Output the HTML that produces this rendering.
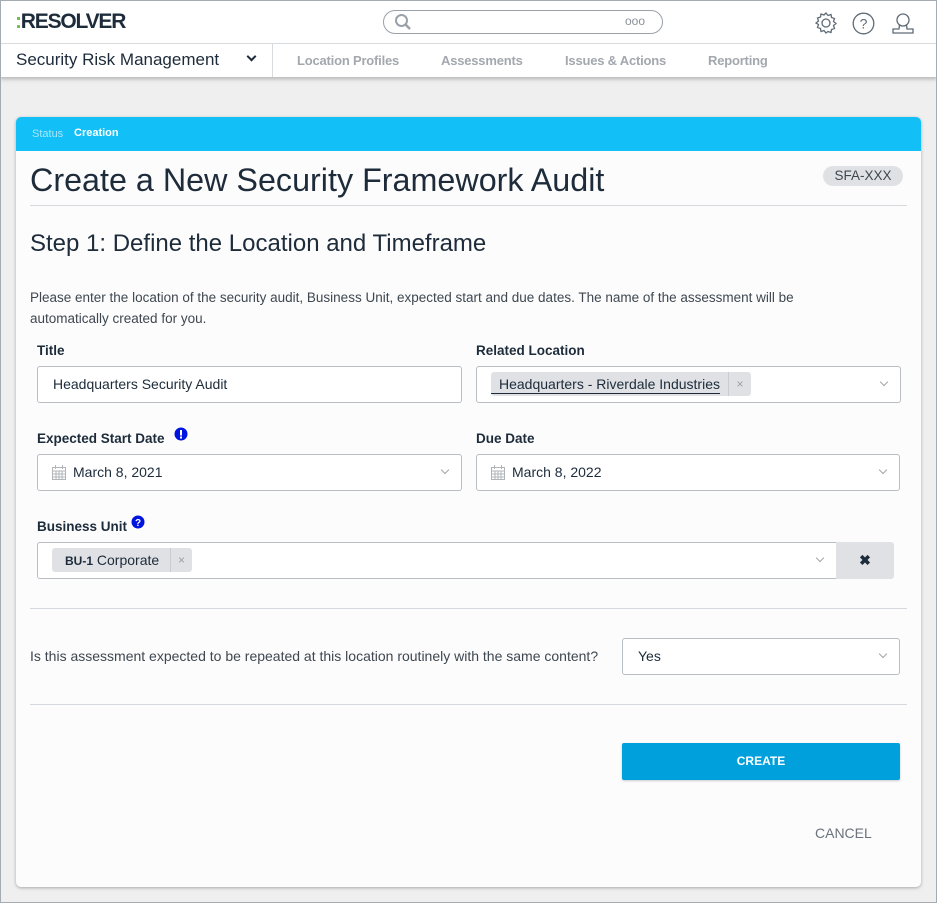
<!DOCTYPE html>
<html><head><meta charset="utf-8"><style>
*{box-sizing:border-box;margin:0;padding:0}
body{width:937px;height:903px;overflow:hidden;background:#efefef;font-family:"Liberation Sans",sans-serif;color:#1d2b3a;position:relative}
.frame{position:absolute;left:0;top:0;width:937px;height:903px;border:1px solid #a4abb3;pointer-events:none;z-index:10}
.a{position:absolute}
.hdr{left:0;top:0;width:937px;height:77px;background:#fff;box-shadow:0 2px 4px rgba(0,0,0,.25)}
.nav{font-size:13px;color:#a3a8ae;font-weight:bold;top:53px;letter-spacing:-0.2px}
.card{left:16px;top:117px;width:905px;height:770px;background:#fcfcfc;border-radius:5px;box-shadow:0 1px 3px rgba(0,0,0,.3);overflow:hidden}
.lbl{font-size:13.5px;font-weight:bold;color:#1d2b3a}
.inp{border:1px solid #b9bec4;border-radius:3px;background:#fff;height:37px;font-size:14px;line-height:35px}
.chev{position:absolute;right:13px;top:12px;width:6px;height:6px;border-right:1px solid #a0a6ac;border-bottom:1px solid #a0a6ac;transform:rotate(45deg)}
.tag{background:#dfe1e4;border-radius:3px;height:24px;line-height:24px;font-size:14px;display:inline-block}
.hr{height:1px;background:#d5d8dc}
</style></head><body>
<div class="frame"></div>
<div class="a hdr">
  <div class="a" style="left:15px;top:10px;font-size:21px;font-weight:bold;letter-spacing:-1.2px;color:#1d2b3a"><span style="color:#6cc24a">:</span>RESOLVER</div>
  <div class="a" style="left:383px;top:10px;width:280px;height:24px;border:1px solid #9aa1a8;border-radius:12px"></div>
  <svg class="a" style="left:394px;top:13px" width="18" height="18" viewBox="0 0 18 18"><circle cx="7.5" cy="7.5" r="5.5" fill="none" stroke="#9aa1a8" stroke-width="2"/><line x1="11.5" y1="11.5" x2="16" y2="16" stroke="#9aa1a8" stroke-width="2.5"/></svg>
  <div class="a" style="left:625px;top:14px;font-size:12px;color:#8a9199">ooo</div>
  <svg class="a" style="left:814px;top:11px" width="24" height="24" viewBox="0 0 24 24"><path d="M12 2l2 2.5 3-1 .5 3 3 1-1 3 2.5 2-2.5 2 1 3-3 1-.5 3-3-1L12 22l-2-2.5-3 1-.5-3-3-1 1-3L2 12l2.5-2-1-3 3-1 .5-3 3 1z" fill="none" stroke="#5f6b76" stroke-width="1.3"/><circle cx="12" cy="12" r="4" fill="none" stroke="#5f6b76" stroke-width="1.3"/></svg>
  <svg class="a" style="left:852px;top:12px" width="23" height="23" viewBox="0 0 23 23"><circle cx="11.5" cy="11.5" r="10.3" fill="none" stroke="#5f6b76" stroke-width="1.3"/><text x="11.5" y="16.5" text-anchor="middle" font-size="14" fill="#5f6b76" font-family="Liberation Sans">?</text></svg>
  <svg class="a" style="left:891px;top:12px" width="24" height="24" viewBox="0 0 24 24"><circle cx="12" cy="8" r="6" fill="none" stroke="#5f6b76" stroke-width="1.3"/><path d="M8.5 13 8 17H2v4h20v-4h-6l-.5-4" fill="none" stroke="#5f6b76" stroke-width="1.3"/></svg>
  <div class="a" style="left:0;top:43px;width:937px;height:1px;background:#d8dbde"></div>
  <div class="a" style="left:272px;top:44px;width:1px;height:33px;background:#d8dbde"></div>
  <div class="a" style="left:16px;top:50px;font-size:17px;color:#1d2b3a">Security Risk Management</div>
  <div class="a" style="left:248px;top:53px;width:7px;height:7px;border-right:2px solid #1d2b3a;border-bottom:2px solid #1d2b3a;transform:rotate(45deg)"></div>
  <div class="a nav" style="left:297px">Location Profiles</div>
  <div class="a nav" style="left:441px">Assessments</div>
  <div class="a nav" style="left:565px">Issues &amp; Actions</div>
  <div class="a nav" style="left:708px">Reporting</div>
</div>
<div class="a card">
  <div class="a" style="left:0;top:0;width:905px;height:34px;background:#12bff6"></div>
  <div class="a" style="left:16px;top:11px;font-size:11px;color:#a9e6fa">Status</div>
  <div class="a" style="left:58px;top:10px;font-size:11px;font-weight:bold;color:#fff">Creation</div>
  <div class="a" style="left:14px;top:45px;font-size:32.3px;color:#1d2b3a">Create a New Security Framework Audit</div>
  <div class="a" style="left:807px;top:49px;width:80px;height:20px;background:#dfe1e4;border-radius:10px;font-size:13.5px;text-align:center;line-height:20px;color:#3e4750">SFA-XXX</div>
  <div class="a hr" style="left:14px;top:88px;width:877px"></div>
  <div class="a" style="left:14px;top:113px;font-size:24px;color:#1d2b3a">Step 1: Define the Location and Timeframe</div>
  <div class="a" style="left:14px;top:170px;width:800px;font-size:13.5px;line-height:21px;color:#3e4750">Please enter the location of the security audit, Business Unit, expected start and due dates. The name of the assessment will be automatically created for you.</div>
  <div class="a lbl" style="left:21px;top:226px">Title</div>
  <div class="a inp" style="left:21px;top:249px;width:425px;padding-left:15px">Headquarters Security Audit</div>
  <div class="a lbl" style="left:460px;top:226px">Related Location</div>
  <div class="a inp" style="left:460px;top:249px;width:425px"><div class="a tag" style="left:14px;top:5px;width:260px"><span style="padding-left:8px;border-bottom:1px solid #1d2b3a;line-height:18px;display:inline-block">Headquarters - Riverdale Industries</span><span class="a" style="left:237px;top:0;width:23px;border-left:1px solid #c8cbcf;text-align:center;color:#9aa1a8;font-size:12px">×</span></div><div class="chev"></div></div>
  <div class="a lbl" style="left:21px;top:314px">Expected Start Date</div>
  <svg class="a" style="left:158px;top:310px" width="14" height="14"><circle cx="7" cy="7" r="6.5" fill="#0014e0"/><rect x="6" y="3" width="2" height="5.5" fill="#fff"/><rect x="6" y="9.5" width="2" height="2" fill="#fff"/></svg>
  <div class="a inp" style="left:21px;top:337px;width:425px;padding-left:35px">March 8, 2021<svg class="a" style="left:14px;top:10px" width="14" height="15" viewBox="0 0 14 15"><rect x="0.5" y="2.5" width="13" height="12" fill="none" stroke="#b0b5ba"/><path d="M0.5 6h13M0.5 9h13M0.5 12h13M4 6v9M7 6v9M10 6v9M3.5 0v4M10.5 0v4" stroke="#b0b5ba"/></svg><div class="chev"></div></div>
  <div class="a lbl" style="left:460px;top:314px">Due Date</div>
  <div class="a inp" style="left:460px;top:337px;width:424px;padding-left:35px">March 8, 2022<svg class="a" style="left:14px;top:10px" width="14" height="15" viewBox="0 0 14 15"><rect x="0.5" y="2.5" width="13" height="12" fill="none" stroke="#b0b5ba"/><path d="M0.5 6h13M0.5 9h13M0.5 12h13M4 6v9M7 6v9M10 6v9M3.5 0v4M10.5 0v4" stroke="#b0b5ba"/></svg><div class="chev"></div></div>
  <div class="a lbl" style="left:21px;top:402px">Business Unit</div>
  <svg class="a" style="left:115px;top:398px" width="14" height="14"><circle cx="7" cy="7" r="6.5" fill="#0014e0"/><text x="7" y="11" text-anchor="middle" font-size="10" font-weight="bold" fill="#fff" font-family="Liberation Sans">?</text></svg>
  <div class="a inp" style="left:21px;top:425px;width:800px;border-radius:3px 0 0 3px"><div class="a tag" style="left:14px;top:5px;width:140px"><span style="padding-left:13px;font-size:12px;font-weight:bold">BU-1</span> Corporate<span class="a" style="left:118px;top:0;width:22px;border-left:1px solid #c8cbcf;text-align:center;color:#9aa1a8;font-size:12px">×</span></div><div class="chev"></div></div>
  <div class="a" style="left:820px;top:425px;width:58px;height:37px;background:#dfe1e4;border-radius:0 3px 3px 0;text-align:center;line-height:37px;font-size:14px;font-weight:bold">✖</div>
  <div class="a hr" style="left:14px;top:491px;width:877px"></div>
  <div class="a" style="left:14px;top:531px;font-size:14px;color:#3e4750">Is this assessment expected to be repeated at this location routinely with the same content?</div>
  <div class="a inp" style="left:606px;top:521px;width:278px;padding-left:15px;font-size:14px">Yes<div class="chev"></div></div>
  <div class="a hr" style="left:14px;top:587px;width:877px"></div>
  <div class="a" style="left:606px;top:626px;width:278px;height:37px;background:#00a0dc;border-radius:2px;color:#fff;font-size:12px;font-weight:bold;text-align:center;line-height:37px;box-shadow:0 1px 2px rgba(0,0,0,.2)">CREATE</div>
  <div class="a" style="left:799px;top:708px;font-size:14px;color:#6a737c">CANCEL</div>
</div>
</body></html>
